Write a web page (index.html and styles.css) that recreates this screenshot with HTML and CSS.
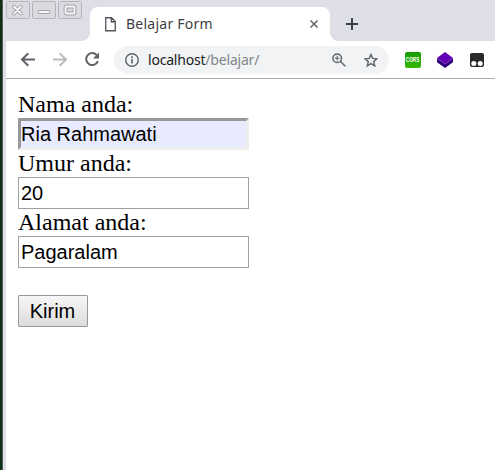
FILE: index.html
```html
<!DOCTYPE html>
<html lang="id">
<head>
<meta charset="utf-8">
<title>Belajar Form</title>
<link rel="stylesheet" href="styles.css">
</head>
<body>
<div class="window">
  <header class="tabstrip">
    <div class="controls">
      <svg width="24" height="18" viewBox="0 0 24 18"><rect class="frame" x=".5" y=".5" width="23" height="17" rx="1"/><path class="mark-edge" d="M8 5.5l7 7M15 5.5l-7 7"/><path class="mark" d="M8 5.5l7 7M15 5.5l-7 7"/></svg>
      <svg width="24" height="18" viewBox="0 0 24 18"><rect class="frame" x=".5" y=".5" width="23" height="17" rx="1"/><path class="mark-edge" d="M7.5 11h9"/><path class="mark" d="M7.5 11h9"/></svg>
      <svg width="24" height="18" viewBox="0 0 24 18"><rect class="frame" x=".5" y=".5" width="23" height="17" rx="1"/><rect class="mark-edge" x="7.5" y="5.5" width="9" height="7" rx="1"/><rect class="mark" x="7.5" y="5.5" width="9" height="7" rx="1"/></svg>
    </div>
    <div class="tab">
      <svg class="page" width="11" height="15" viewBox="0 0 11 15"><path d="M.75.75h5.8l3.7 3.8v9.2H.75zM6.3.75v4h4" fill="none" stroke="#505358" stroke-width="1.3"/></svg>
      <span class="title">Belajar Form</span>
      <svg class="close" width="8" height="8" viewBox="0 0 8 8"><path d="M.5.5l7 7M7.5.5l-7 7" stroke="#5f6368" stroke-width="1.5"/></svg>
    </div>
    <svg class="plus" width="12" height="12" viewBox="0 0 12 12"><path d="M6 0v12M0 6h12" stroke="#3c4043" stroke-width="2"/></svg>
  </header>
  <nav class="toolbar">
    <svg class="back" width="16" height="16" viewBox="0 0 16 16"><path d="M15 7.5H2.3M8.3 1.2L2 7.5l6.3 6.3" fill="none" stroke="#5f6368" stroke-width="2"/></svg>
    <svg class="forward" width="16" height="16" viewBox="0 0 16 16"><path d="M1 7.5h12.7M7.7 1.2L14 7.5l-6.3 6.3" fill="none" stroke="#babcbe" stroke-width="2"/></svg>
    <svg class="reload" width="16" height="16" viewBox="0 0 16 16"><path d="M12.7 3.1A6 6 0 1 0 13.9 9" fill="none" stroke="#5f6368" stroke-width="2"/><path d="M15 .5v6H9z" fill="#5f6368"/></svg>
    <div class="address">
      <svg width="16" height="16" viewBox="0 0 16 16"><circle cx="8" cy="8" r="6.3" fill="none" stroke="#5f6368" stroke-width="1.4"/><path d="M8 7v4.5M8 4.3v1.6" stroke="#5f6368" stroke-width="1.6"/></svg>
      <span class="url">localhost<span class="path">/belajar/</span></span>
      <svg class="magnify" width="14" height="14" viewBox="0 0 14 14"><g fill="none" stroke="#5f6368" stroke-width="1.5"><circle cx="5.2" cy="5.2" r="4.3"/><path d="M8.3 8.3l5 5"/><path d="M2.8 5.2h4.8M5.2 2.8v4.8" stroke-width="1.1"/></g></svg>
      <svg class="star" width="14" height="14" viewBox="0 0 14 14"><path d="M7 1.4l1.7 4 4.3.4-3.3 2.8 1 4.3L7 10.6l-3.7 2.3 1-4.3L1 5.8l4.3-.4z" fill="none" stroke="#5f6368" stroke-width="1.4"/></svg>
    </div>
    <span class="cors"><span class="cors-text">CORS</span></span>
    <svg class="cube" width="16" height="16" viewBox="0 0 16 16"><path d="M0 6.2L8 12l8-5.8v4L8 16l-8-5.8z" fill="#35007b"/><path d="M8 0l8 6-8 6-8-6z" fill="#6200b3"/></svg>
    <svg class="monkey" width="14" height="14" viewBox="0 0 14 14"><path d="M2 0h10q2 0 2 2v10q0 2-2 2H2q-2 0-2-2V2q0-2 2-2z" fill="#2a2a2a"/><circle cx="3.8" cy="10.6" r="2.5" fill="#fff"/><circle cx="10.2" cy="10.6" r="2.5" fill="#fff"/></svg>
  </nav>
  <main>
    <form>
      <label for="nama">Nama anda:</label>
      <input class="filled" id="nama" type="text" value="Ria Rahmawati">
      <label for="umur">Umur anda:</label>
      <input id="umur" type="text" value="20">
      <label for="alamat">Alamat anda:</label>
      <input id="alamat" type="text" value="Pagaralam">
      <button type="button">Kirim</button>
    </form>
  </main>
</div>
</body>
</html>
```
FILE: styles.css
```css
* { box-sizing: border-box; }
body { margin: 0; height: 470px; overflow: hidden; background: #fff; }
svg { display: block; flex: none; }
.window {
  height: 470px;
  padding-left: 6px;
  background: linear-gradient(90deg, #0b3013 0 2px, #555c5b 2px 3px, #dedee6 3px 6px, #fff 6px);
}
.tabstrip {
  display: flex;
  align-items: flex-start;
  height: 41px;
  background: #dedee6;
}
.controls { display: flex; gap: 2px; width: 84px; padding-top: 1px; }
.frame { fill: #dadae1; stroke: #b4b4ba; }
.mark, .mark-edge { fill: none; stroke-linecap: round; }
.mark-edge { stroke: #a2a2a8; stroke-width: 3.8; }
.mark { stroke: #f7f7fa; stroke-width: 1.8; }
.tab {
  position: relative;
  display: flex;
  align-items: center;
  width: 240px;
  height: 34px;
  margin-top: 7px;
  padding: 0 12px 0 15px;
  border-radius: 8px 8px 0 0;
  background: #fff;
}
.tab::before, .tab::after {
  content: "";
  position: absolute;
  bottom: 0;
  width: 8px;
  height: 8px;
}
.tab::before { left: -8px; background: radial-gradient(circle at 0 0, transparent 7.5px, #fff 8px); }
.tab::after { right: -8px; background: radial-gradient(circle at 100% 0, transparent 7.5px, #fff 8px); }
.title {
  margin-left: 10px;
  font: 14px/20px "Noto Sans", sans-serif;
  letter-spacing: .25px;
  color: #3c4043;
}
.close { margin-left: auto; }
.plus { margin: 18px 0 0 16px; }
.toolbar {
  display: flex;
  align-items: center;
  height: 38px;
  padding-left: 14px;
  border-bottom: 1px solid #aaa;
  background: #fff;
}
.forward, .reload { margin-left: 16px; }
.address {
  display: flex;
  align-items: center;
  width: 275px;
  height: 28px;
  margin: 0 16px 0 14px;
  padding: 0 11px 0 10px;
  border-radius: 14px;
  background: #f1f3f4;
}
.url {
  margin-left: 8px;
  font: 14px/20px "Noto Sans", sans-serif;
  letter-spacing: -.2px;
  color: #202124;
}
.path { color: #80868b; }
.magnify { margin-left: auto; }
.star { margin-left: 18px; }
.cors {
  display: flex;
  justify-content: center;
  width: 16px;
  height: 16px;
  border-radius: 2px;
  background: linear-gradient(#179b07, #35b800);
}
.cors-text {
  flex: none;
  font: bold 8px/16px "Liberation Sans", sans-serif;
  color: #fff;
  transform: scaleX(.58);
  margin: 0 -6px;
}
.cube { margin-left: 16px; }
.monkey { margin-left: 17px; }
form { display: flex; flex-direction: column; align-items: flex-start; padding: 12px; }
label { font: 24px/27px "Liberation Serif", serif; color: #000; }
input, button { font: 20px/24px "Liberation Sans", sans-serif; color: #000; }
input {
  width: 231px;
  height: 32px;
  padding: 1px 2px;
  border: 1px solid #a0a0a0;
  border-radius: 0;
  background: #fff;
}
.filled {
  padding: 0;
  border: 3px solid;
  border-color: #999 #eee #eee #999;
  background: #e8ebff;
}
button {
  width: 70px;
  height: 32px;
  margin-top: 27px;
  padding: 0 1px 0 0;
  border: 1px solid #999;
  border-radius: 1px;
  background: linear-gradient(#f6f6f6, #ddd);
}
```
